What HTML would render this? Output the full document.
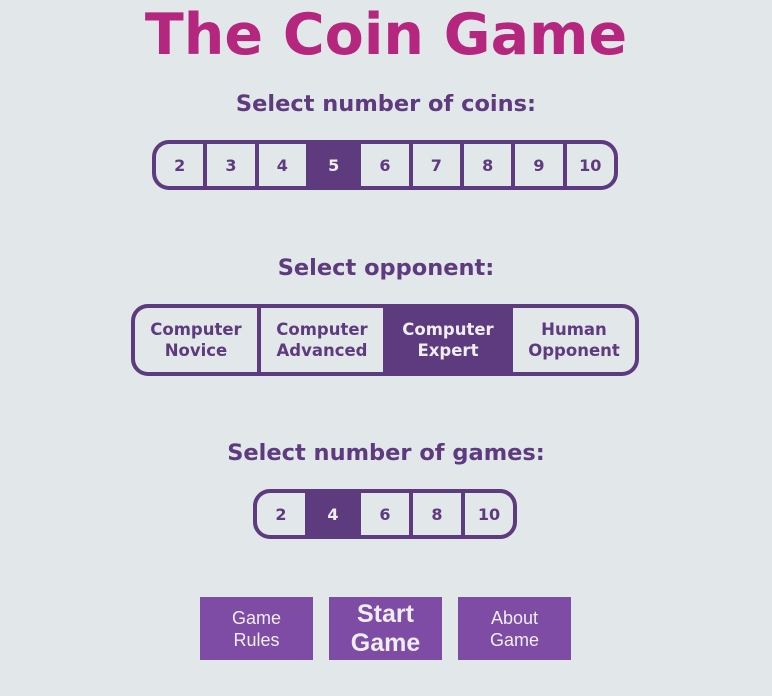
<!DOCTYPE html>
<html><head><style>
body{margin:0;width:772px;height:696px;background:#e2e7ea;font-family:"DejaVu Sans",Verdana,sans-serif;color:#5e3a7e;position:relative;overflow:hidden}
h1{position:absolute;top:1px;left:0;width:772px;margin:0;text-align:center;font-size:57px;line-height:68px;color:#b5267f;font-weight:bold}
.h{position:absolute;left:0;width:772px;text-align:center;font-weight:bold;font-size:22.5px}
.bar{position:absolute;box-sizing:border-box;border:4px solid #5e3a7e;border-radius:17px;background:#5e3a7e;display:flex;gap:4px;overflow:hidden}
.bar div{flex:1;background:#e2e7ea;display:flex;align-items:center;justify-content:center;font-weight:bold;font-size:16px;text-align:center;line-height:21px}
.bar div.s{background:#5e3a7e;color:#eee}
.bar.o div{font-size:16.5px}
.b{position:absolute;top:597px;width:113px;height:63px;background:#7f4ca5;color:#eee;font-family:"Liberation Sans",Arial,sans-serif;font-size:18px;line-height:22px;display:flex;align-items:center;justify-content:center;text-align:center}
</style></head><body>
<h1>The Coin Game</h1>
<div class="h" style="top:91px">Select number of coins:</div>
<div class="bar" style="left:152px;top:140px;width:466px;height:50px">
<div>2</div><div>3</div><div>4</div><div class="s">5</div><div>6</div><div>7</div><div>8</div><div>9</div><div>10</div></div>
<div class="h" style="top:255px">Select opponent:</div>
<div class="bar o" style="left:131px;top:304px;width:508px;height:72px">
<div>Computer<br>Novice</div><div>Computer<br>Advanced</div><div class="s">Computer<br>Expert</div><div>Human<br>Opponent</div></div>
<div class="h" style="top:440px">Select number of games:</div>
<div class="bar" style="left:253px;top:489px;width:264px;height:50px">
<div>2</div><div class="s">4</div><div>6</div><div>8</div><div>10</div></div>
<div class="b" style="left:200px">Game<br>Rules</div>
<div class="b" style="left:329px;font-weight:bold;font-size:25px;line-height:29px">Start<br>Game</div>
<div class="b" style="left:458px">About<br>Game</div>
</body></html>
